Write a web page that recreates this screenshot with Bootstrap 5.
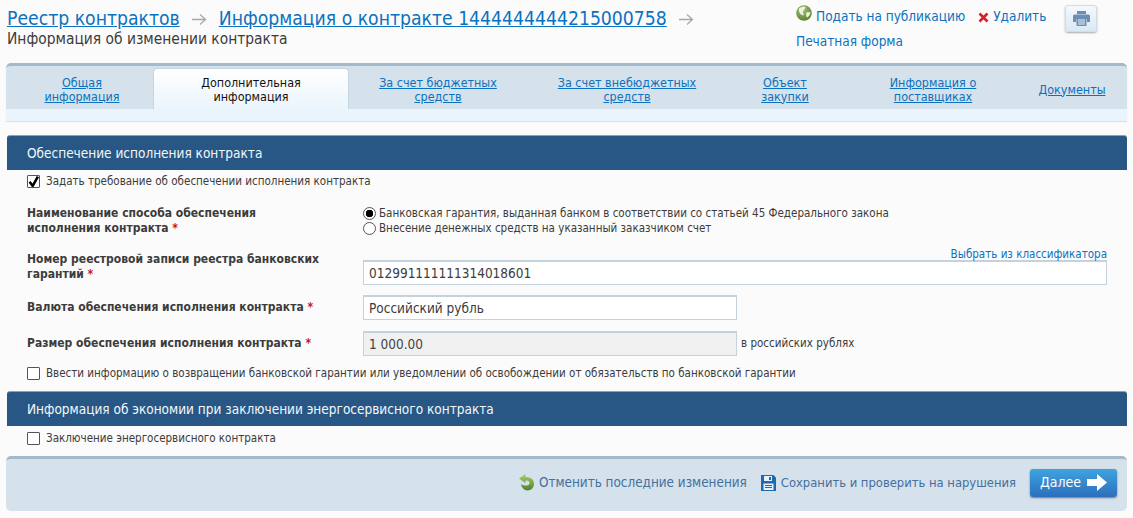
<!DOCTYPE html>
<html lang="ru">
<head>
<meta charset="utf-8">
<title>Информация об изменении контракта</title>
<link href="https://cdn.jsdelivr.net/npm/bootstrap@5.3.0/dist/css/bootstrap.min.css" rel="stylesheet">
<style>
html,body{height:518px;overflow:hidden}
body{background:#fbfbfb;font-family:"DejaVu Sans Condensed","Noto Sans",sans-serif;font-size:11.52px;color:#3c3c3c;line-height:15px}
a{color:#0a72c0}
.page-wrap{width:1133px;height:518px;padding:0 6px 0 7px;position:relative}
.head-zone{height:63px}
.crumbs{font-size:19.2px;line-height:24px;padding-top:7px;color:#999;white-space:nowrap}
.crumbs a{color:#0a72c0}
.crumb-arrow{display:inline-block;margin:0 12px;vertical-align:-1px}
.sub-title{font-size:15.4px;line-height:17px;color:#3c3c3c}
.actions{width:331px;margin-left:auto;padding-top:8px;font-size:13.5px;position:relative}
.actions a{text-decoration:none}
.act-row{height:25px;line-height:17px;white-space:nowrap;display:flex;align-items:flex-start;gap:4px}
.del-link{margin-left:9px}
.globe-ico{margin-top:-3px}
.print-btn{width:32px;height:27px;border:1px solid #d3dde6;border-radius:3px;background:linear-gradient(#f4f9fd,#d9e8f5);box-shadow:0 1px 2px #aaa;position:absolute;top:5px;left:269px;display:flex;align-items:center;justify-content:center}
.tabs-box{height:58px;background:#d5e1eb;border-top:3px solid #a3bacb;border-radius:5px 5px 0 0;margin-left:-1px;box-shadow:0 1px 1px #ddd}
.tabs-line{display:flex;font-size:12.45px;line-height:14px;padding-top:3px;box-sizing:content-box;height:40px}
.tab-item{display:flex;align-items:center;justify-content:center;text-align:center;padding-top:1px}
.tab-active{background:linear-gradient(#fff,#eaf5fc);border:1px solid #c5d4e0;border-bottom:0;border-radius:4px 4px 0 0;color:#111;margin-top:-1px;height:41px}
.tabs-under{height:12px;background:#e9f4fc}
.w1{width:147px;padding-left:5px}.w2{width:196px}.w3{width:178px}.w4{width:200px}.w5{width:116px}.w6{width:180px}.w7{width:98px}
.sect-bar{background:#285785;color:#f3f7fa;height:35px;font-size:13.5px;line-height:35px;padding-left:20px;border-radius:3px 3px 0 0;border-top:1px solid #88a2bb}
.check-line{padding-left:20px;display:flex;align-items:center;gap:6px;height:15px;white-space:nowrap}
.chk{appearance:none;width:13px;height:13px;margin:0;background:#fff;border:1px solid #555;border-radius:1px;flex:none}
.chk:checked{background-repeat:no-repeat;background-position:center;background-size:12px;background-image:url("data:image/svg+xml,%3Csvg xmlns='http://www.w3.org/2000/svg' viewBox='0 0 12 12'%3E%3Cpath d='M2 6l3 4 5-9' fill='none' stroke='%23000' stroke-width='2.4'/%3E%3C/svg%3E")}
.rad{appearance:none;width:13px;height:13px;margin:0;border:1px solid #555;border-radius:50%;background:#fff;flex:none}
.rad:checked{background:radial-gradient(circle,#000 0 3.5px,#fff 4px)}
.form-line{display:flex;padding-left:20px}
.lab{width:336px;flex:none;font-weight:700;color:#3c3c3c;font-size:12px;line-height:15px}
.req{color:#c4161c}
.rad-line{display:flex;align-items:center;gap:3px;height:15px;white-space:nowrap}
.fld{display:block;height:25px;border:1px solid #c4d2de;border-top-width:2px;background:#fff;padding:0 5px;font-size:13.5px;line-height:21px;color:#3c3c3c;font-family:inherit;outline:0;border-radius:0}
.fld-wide{width:744px}.fld-mid{width:374px}
.fld:disabled{background:#f0f0f0;color:#444}
.clsf{display:block;text-align:right;text-decoration:none;width:744px;line-height:13px;height:12px;margin-top:3px}
.foot-bar{height:55px;background:#d5e1eb;border-top:3px solid #a3bacb;border-radius:5px;margin-left:-1px;display:flex;align-items:center;justify-content:flex-end;padding:0 10px 5px 0;font-size:13.4px}
.foot-bar a{color:#44709f;text-decoration:none;display:flex;align-items:center;white-space:nowrap}
.undo-link{gap:5px;margin-right:14px}
.save-link{gap:5px;margin-right:14px;font-size:12.88px}
.go-btn{width:87px;height:28px;border-radius:3px;background:linear-gradient(#3ea4de,#2c6fbd);color:#fff;font-size:14px;border:0;box-shadow:0 1px 2px #777;display:flex;align-items:center;justify-content:center;gap:6px;padding:0;font-family:inherit}
.gap-sect1{margin-top:14px}
.gap-a{margin-top:4px}
.gap-b{margin-top:17px}
.gap-c{margin-top:9px}
.lab-top{padding-top:7px}
.gap-d{margin-top:10px}
.gap-e{margin-top:11px}
.gap-f{margin-top:10px}
.gap-g{margin-top:5px}
.gap-h{margin-top:10px}
</style>
</head>
<body>
<div class="page-wrap">
  <div class="head-zone d-flex">
    <div>
      <div class="crumbs"><a href="#">Реестр контрактов</a><svg class="crumb-arrow" width="15" height="13" viewBox="0 0 15 13"><path d="M0 6.500h13M8 1.500l5.500 5-5.500 5" fill="none" stroke="#a8a8a8" stroke-width="1.300"/></svg><a href="#">Информация о контракте 1444444444215000758</a><svg class="crumb-arrow" width="15" height="13" viewBox="0 0 15 13"><path d="M0 6.500h13M8 1.500l5.500 5-5.500 5" fill="none" stroke="#a8a8a8" stroke-width="1.300"/></svg></div>
      <div class="sub-title">Информация об изменении контракта</div>
    </div>
    <div class="actions">
      <div class="act-row">
        <a href="#" class="d-flex gap-1 align-items-start"><svg width="16" height="16" viewBox="0 0 16 16" class="globe-ico"><defs><radialGradient id="gl" cx=".4" cy=".3" r=".8"><stop offset="0" stop-color="#a8c47a"/><stop offset="1" stop-color="#4d7a2a"/></radialGradient></defs><circle cx="8" cy="8" r="7.800" fill="url(#gl)"/><path d="M3 3.500C5 2 7 1.500 9.500 2c.5 1.500-1.500 2-2 3.500-1.500 1-.5 3 .5 4-.5 1-2 1-2.500 0C4 9 2.500 6 3 3.500zM10.500 7.500c1.500-.5 3-.5 4 0-.5 2.500-2 4.500-3.500 5-.8-1.500-1.300-3.500-.5-5z" fill="#eef3df"/></svg>Подать на публикацию</a>
        <a href="#" class="d-flex align-items-start del-link gap-1"><svg class="mt-1" width="11" height="11" viewBox="0 0 11 11"><path d="M1.500 1.500l8 8M9.500 1.500l-8 8" stroke="#d0232b" stroke-width="2.600"/></svg>Удалить</a>
      </div>
      <div class="act-row"><a href="#">Печатная форма</a></div>
      <div class="print-btn"><svg width="17" height="15" viewBox="0 0 17 15"><path d="M4 0h9v3H4zM1.500 3.500h14q1.500 0 1.500 1.500v6h-3V8H3v3H0V5q0-1.500 1.500-1.500z" fill="#6b8fb2"/><path d="M3.500 7h10v8h-10z" fill="#6b8fb2"/><path d="M5 9h7M5 11h7M5 13h7" stroke="#e6f0f8"/></svg></div>
    </div>
  </div>

  <div class="tabs-box">
    <div class="tabs-line">
      <div class="tab-item w1"><a href="#">Общая<br>информация</a></div>
      <div class="tab-item w2 tab-active">Дополнительная<br>информация</div>
      <div class="tab-item w3"><a href="#">За счет бюджетных<br>средств</a></div>
      <div class="tab-item w4"><a href="#">За счет внебюджетных<br>средств</a></div>
      <div class="tab-item w5"><a href="#">Объект<br>закупки</a></div>
      <div class="tab-item w6"><a href="#">Информация о<br>поставщиках</a></div>
      <div class="tab-item w7"><a href="#">Документы</a></div>
    </div>
    <div class="tabs-under"></div>
  </div>

  <div class="sect-bar gap-sect1">Обеспечение исполнения контракта</div>
  <div class="check-line gap-a"><input class="chk" type="checkbox" checked aria-label="Задать требование"><span>Задать требование об обеспечении исполнения контракта</span></div>

  <div class="form-line gap-b">
    <div class="lab">Наименование способа обеспечения<br>исполнения контракта <span class="req">*</span></div>
    <div>
      <label class="rad-line"><input class="rad" type="radio" name="m" checked>Банковская гарантия, выданная банком в соответствии со статьей 45 Федерального закона</label>
      <label class="rad-line"><input class="rad" type="radio" name="m">Внесение денежных средств на указанный заказчиком счет</label>
    </div>
  </div>

  <div class="form-line gap-c">
    <div class="lab lab-top">Номер реестровой записи реестра банковских<br>гарантий <span class="req">*</span></div>
    <div>
      <a href="#" class="clsf">Выбрать из классификатора</a>
      <input class="fld fld-wide" type="text" value="012991111111314018601" aria-label="Номер">
    </div>
  </div>

  <div class="form-line align-items-center gap-d">
    <div class="lab">Валюта обеспечения исполнения контракта <span class="req">*</span></div>
    <input class="fld fld-mid" type="text" value="Российский рубль" aria-label="Валюта">
  </div>

  <div class="form-line align-items-center gap-e">
    <div class="lab">Размер обеспечения исполнения контракта <span class="req">*</span></div>
    <input class="fld fld-mid" type="text" value="1 000.00" disabled aria-label="Размер">
    <span class="ms-1">в российских рублях</span>
  </div>

  <div class="check-line gap-f"><input class="chk" type="checkbox" aria-label="Ввести"><span>Ввести информацию о возвращении банковской гарантии или уведомлении об освобождении от обязательств по банковской гарантии</span></div>

  <div class="sect-bar gap-f">Информация об экономии при заключении энергосервисного контракта</div>
  <div class="check-line gap-g"><input class="chk" type="checkbox" aria-label="Заключение"><span>Заключение энергосервисного контракта</span></div>

  <div class="foot-bar gap-h">
    <a href="#" class="undo-link"><svg width="15" height="17" viewBox="0 0 15 17"><defs><linearGradient id="ug" x1="0" y1="0" x2="0" y2="1"><stop offset="0" stop-color="#a7cf6b"/><stop offset="1" stop-color="#4f8228"/></linearGradient></defs><path d="M6.500 0L0 4.500 6.500 9V6.500c2.500 0 4 .5 4 2.500 0 2-2 2.500-4 2.500-1.500 0-3-.5-4.500-1.500.5 3.500 3 6.500 6.500 6.500 4 0 6.500-3 6.500-6.500C15 5 11.500 3 6.500 3z" fill="url(#ug)"/></svg>Отменить последние изменения</a>
    <a href="#" class="save-link"><svg width="15" height="16" viewBox="0 0 15 16"><path d="M0 0h12.500L15 2.500V16H0z" fill="#1d6ab0"/><path d="M3 1h8v5H3z" fill="#e8f1f8"/><path d="M8 2h2v3H8z" fill="#1d6ab0"/><path d="M2.500 8.500h10V15h-10z" fill="#e8f1f8"/><path d="M4 10.500h7M4 12.500h7" stroke="#1d6ab0"/></svg>Сохранить и проверить на нарушения</a>
    <button class="go-btn" type="button">Далее<svg width="20" height="17" viewBox="0 0 20 17"><path d="M0 5h10V0l10 8.500L10 17v-5H0z" fill="#fff"/></svg></button>
  </div>
</div>
</body>
</html>
